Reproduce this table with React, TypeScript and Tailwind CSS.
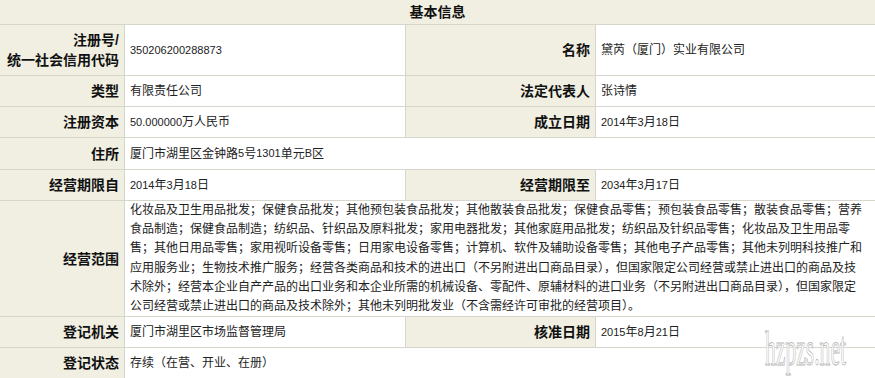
import React from 'react';

const lbl = 'bg-[#f0efe2] border-b border-r border-[#d6d6cc] flex items-center justify-end pr-[5px] text-[14px] font-bold text-[#111] leading-[20px] text-right';
const val = 'bg-white border-b border-r border-[#d6d6cc] flex items-center pl-[5px] text-[12px] text-[#222]';

const scope =
    '化妆品及卫生用品批发；保健食品批发；其他预包装食品批发；其他散装食品批发；保健食品零售；预包装食品零售；散装食品零售；营养食品制造；保健食品制造；纺织品、针织品及原料批发；家用电器批发；其他家庭用品批发；纺织品及针织品零售；化妆品及卫生用品零售；其他日用品零售；家用视听设备零售；日用家电设备零售；计算机、软件及辅助设备零售；其他电子产品零售；其他未列明科技推广和应用服务业；生物技术推广服务；经营各类商品和技术的进出口（不另附进出口商品目录），但国家限定公司经营或禁止进出口的商品及技术除外；经营本企业自产产品的出口业务和本企业所需的机械设备、零配件、原辅材料的进口业务（不另附进出口商品目录），但国家限定公司经营或禁止进出口的商品及技术除外；其他未列明批发业（不含需经许可审批的经营项目）。';

// digits in the original are set a size smaller than the Chinese text
function Num({ children }: { children: React.ReactNode }) {
    return <span className="text-[11px]">{children}</span>;
}

function DateText({ y, m, d }: { y: string; m: string; d: string }) {
    return (
        <span>
            <Num>{y}</Num>年<Num>{m}</Num>月<Num>{d}</Num>日
        </span>
    );
}

export default function App() {
    return (
        <div className="relative w-[875px] h-[378px] overflow-hidden bg-white" style={{ fontFamily: '"Liberation Sans", "Noto Sans CJK SC", sans-serif' }}>
            <div className="grid grid-cols-[125px_281px_190px_279px]">
                {/* Header */}
                <div className="col-span-4 h-[25px] bg-[#f0efe2] border-b border-[#d6d6cc] flex items-center justify-center text-[14px] font-bold text-[#111]">
                    基本信息
                </div>

                <div className={`${lbl} h-[51px]`}>注册号/<br />统一社会信用代码</div>
                <div className={`${val} h-[51px]`}><Num>350206200288873</Num></div>
                <div className={`${lbl} h-[51px]`}>名称</div>
                <div className={`${val} h-[51px] border-r-0`}>黛芮（厦门）实业有限公司</div>

                <div className={`${lbl} h-[31px]`}>类型</div>
                <div className={`${val} h-[31px]`}>有限责任公司</div>
                <div className={`${lbl} h-[31px]`}>法定代表人</div>
                <div className={`${val} h-[31px] border-r-0`}>张诗情</div>

                <div className={`${lbl} h-[31px]`}>注册资本</div>
                <div className={`${val} h-[31px]`}><Num>50.000000</Num>万人民币</div>
                <div className={`${lbl} h-[31px]`}>成立日期</div>
                <div className={`${val} h-[31px] border-r-0`}><DateText y="2014" m="3" d="18" /></div>

                <div className={`${lbl} h-[32px]`}>住所</div>
                <div className={`${val} h-[32px] col-span-3 border-r-0`}>厦门市湖里区金钟路<Num>5</Num>号<Num>1301</Num>单元<Num>B</Num>区</div>

                <div className={`${lbl} h-[31px]`}>经营期限自</div>
                <div className={`${val} h-[31px]`}><DateText y="2014" m="3" d="18" /></div>
                <div className={`${lbl} h-[31px]`}>经营期限至</div>
                <div className={`${val} h-[31px] border-r-0`}><DateText y="2034" m="3" d="17" /></div>

                <div className={`${lbl} h-[116px]`}>经营范围</div>
                <div className={`${val} h-[116px] col-span-3 border-r-0 pr-[12px] leading-[19.3px]`}>{scope}</div>

                <div className={`${lbl} h-[31px]`}>登记机关</div>
                <div className={`${val} h-[31px]`}>厦门市湖里区市场监督管理局</div>
                <div className={`${lbl} h-[31px]`}>核准日期</div>
                <div className={`${val} h-[31px] border-r-0`}><DateText y="2015" m="8" d="21" /></div>

                <div className={`${lbl} h-[31px]`}>登记状态</div>
                <div className={`${val} h-[31px] col-span-3 border-r-0`}>存续（在营、开业、在册）</div>
            </div>

            {/* watermark */}
            <div
                className="absolute left-[765px] top-[325px] origin-left scale-x-[0.45] text-[48px] leading-none text-white [-webkit-text-stroke:1px_#b8b8b8]"
                style={{ fontFamily: '"Liberation Serif", serif' }}
            >
                hzpzs.net
            </div>
        </div>
    );
}
